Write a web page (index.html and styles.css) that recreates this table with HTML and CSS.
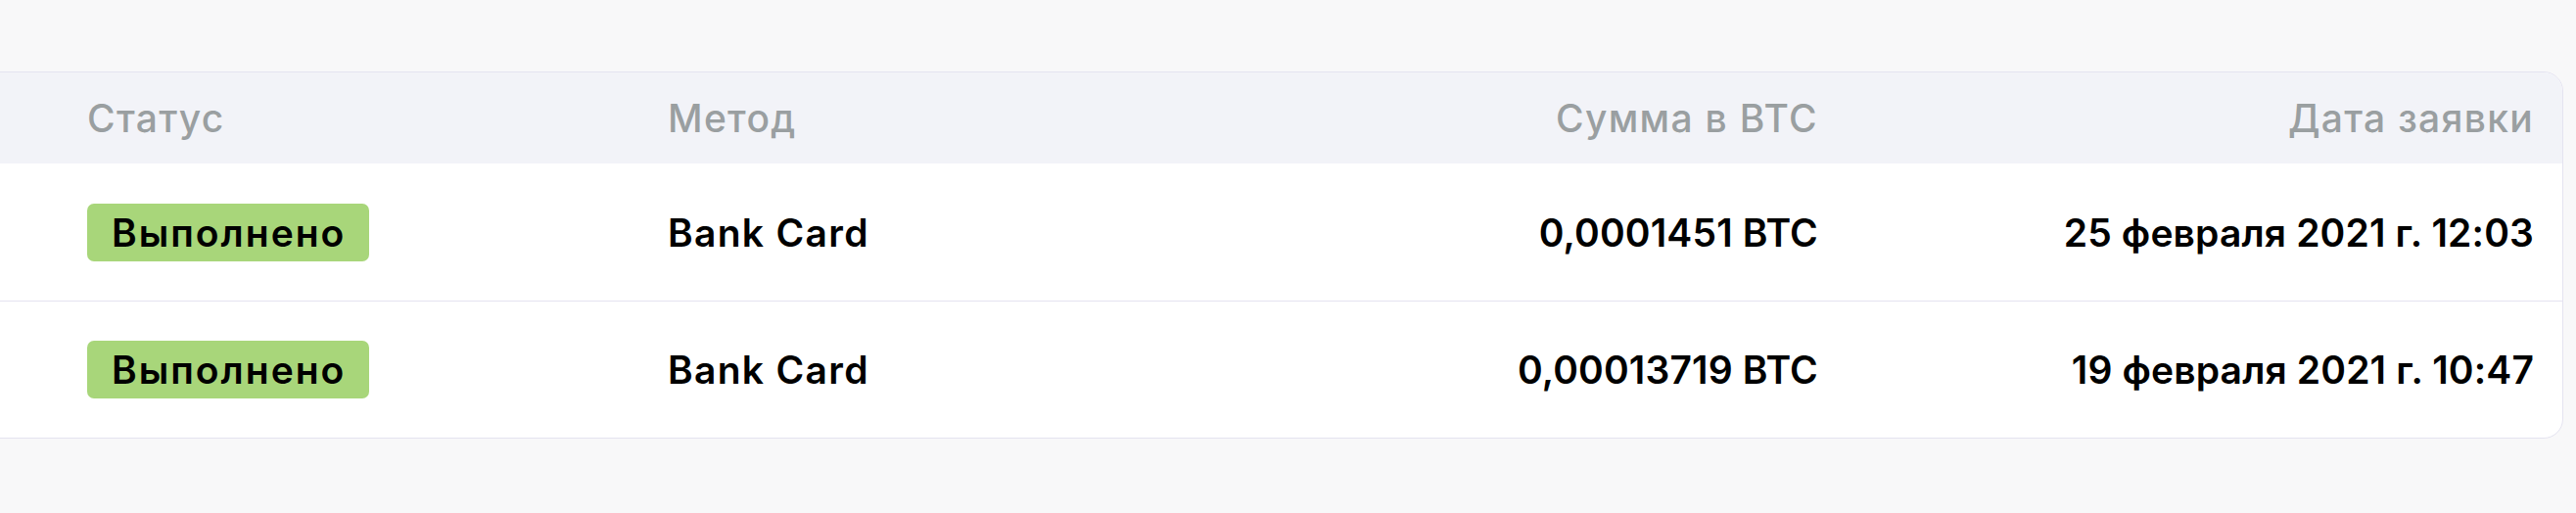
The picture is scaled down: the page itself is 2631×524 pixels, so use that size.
FILE: index.html
```html
<!DOCTYPE html>
<html lang="ru">
<head>
<meta charset="utf-8">
<title>Заявки</title>
<link rel="stylesheet" href="styles.css">
</head>
<body>
<main class="page">
  <section class="card">
    <div class="row head">
      <div class="cell">Статус</div>
      <div class="cell">Метод</div>
      <div class="cell right">Сумма в BTC</div>
      <div class="cell right">Дата заявки</div>
    </div>
    <div class="row">
      <div class="cell"><span class="badge">Выполнено</span></div>
      <div class="cell">Bank Card</div>
      <div class="cell right num">0,0001451 BTC</div>
      <div class="cell right num">25 февраля 2021 г. 12:03</div>
    </div>
    <div class="row">
      <div class="cell"><span class="badge">Выполнено</span></div>
      <div class="cell">Bank Card</div>
      <div class="cell right num">0,00013719 BTC</div>
      <div class="cell right num">19 февраля 2021 г. 10:47</div>
    </div>
  </section>
</main>
</body>
</html>
```
FILE: styles.css
```css
html, body {
  margin: 0;
  background: #f8f8f9;
}
.page {
  padding-top: 73px;
  font-family: Inter, "Noto Sans", sans-serif;
  font-size: 39px;
  font-weight: 600;
  letter-spacing: 1.3px;
  color: #000;
}
.card {
  margin-left: -31px;
  width: 2647px;
  background: #fff;
  border: 1px solid #e4e3f0;
  border-radius: 20px;
  overflow: hidden;
}
.row {
  display: grid;
  grid-template-columns: 593px 500px 675px 731px;
  padding: 0 29px 0 119px;
  height: 139px;
  align-items: center;
}
.row + .row {
  border-top: 1px solid #e4e3f0;
}
.row.head {
  height: 93px;
  background: #f2f3f8;
  color: #9a9fa1;
  font-weight: 500;
}
.row.head + .row {
  border-top: none;
  height: 140px;
}
.cell {
  white-space: nowrap;
}
.right {
  text-align: right;
}
.num {
  letter-spacing: 0.15px;
}
.badge {
  display: inline-block;
  background: #a8d67a;
  border-radius: 7px;
  padding: 0 24px 0 25px;
  height: 59px;
  line-height: 59px;
  letter-spacing: 2px;
}
```
